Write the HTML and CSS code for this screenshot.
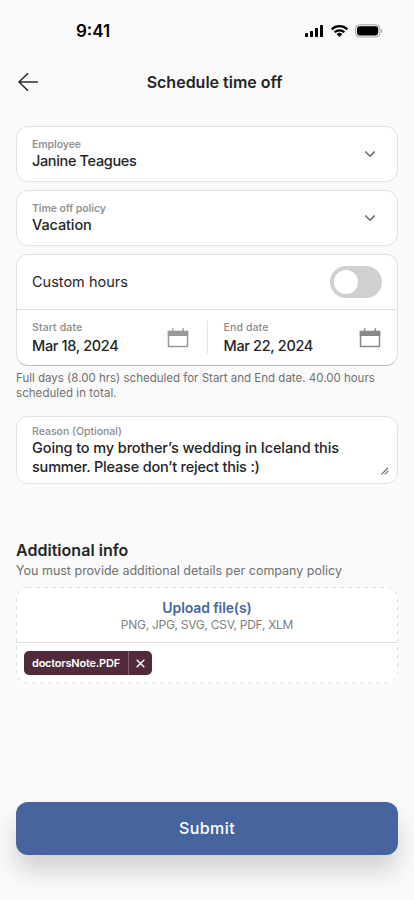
FILE: index.html
```html
<!DOCTYPE html>
<html lang="en">
<head>
<meta charset="utf-8">
<meta name="viewport" content="width=device-width, initial-scale=1">
<title>Schedule time off</title>
<link rel="stylesheet" href="styles.css">
</head>
<body>
<div class="screen">
  <div class="status">
    <span class="time">9:41</span>
    <svg class="status-icons" width="80" height="16" viewBox="0 0 80 16">
      <rect x="0" y="9" width="3" height="4" rx=".8"/>
      <rect x="5" y="7" width="3" height="6" rx=".8"/>
      <rect x="10" y="4" width="3" height="9" rx=".8"/>
      <rect x="15" y="1" width="3" height="12" rx=".8"/>
      <g fill="none" stroke="#000" stroke-width="2.3">
        <path d="M26.7 5.3a11.2 11.2 0 0 1 15.6 0"/>
        <path d="M29.6 8.3a7 7 0 0 1 9.8 0"/>
      </g>
      <path d="M34.5 13 31.7 10.2a4 4 0 0 1 5.6 0z"/>
      <rect x="50.5" y=".8" width="24.4" height="12.2" rx="3.8" fill="none" stroke="#a0a0a0"/>
      <rect x="52" y="2.3" width="21.2" height="9.2" rx="2.4"/>
      <path d="M76.2 5v4.2c1.7-.8 1.7-3.4 0-4.2z" fill="#a0a0a0"/>
    </svg>
  </div>
  <header class="header">
    <svg class="back" width="20" height="18" viewBox="0 0 20 18"><path d="M19.3 9H1M9.5.7 1 9l8.5 8.3"/></svg>
    <h1>Schedule time off</h1>
  </header>
  <main class="form">
    <div class="field select">
      <div><div class="label">Employee</div><div class="value name-value">Janine Teagues</div></div>
      <svg class="chevron" width="12" height="8" viewBox="0 0 12 8"><path d="M1.3 1.5 6 6.2l4.7-4.7"/></svg>
    </div>
    <div class="field select">
      <div><div class="label">Time off policy</div><div class="value">Vacation</div></div>
      <svg class="chevron" width="12" height="8" viewBox="0 0 12 8"><path d="M1.3 1.5 6 6.2l4.7-4.7"/></svg>
    </div>
    <div class="field schedule">
      <div class="custom"><span>Custom hours</span><span class="toggle"><span class="knob"></span></span></div>
      <div class="dates">
        <div class="date start">
          <div><div class="label">Start date</div><div class="value">Mar 18, 2024</div></div>
          <svg class="cal" width="22" height="20" viewBox="0 0 22 20"><path d="M.8 3h20.4v5H.8zM5.1.3h1.4V3H5.1zM15.5.3h1.4V3h-1.4z" fill="currentColor"/><rect x="1.5" y="3.5" width="19" height="15" fill="none" stroke="currentColor" stroke-width="1.5"/></svg>
        </div>
        <div class="date end">
          <div><div class="label">End date</div><div class="value">Mar 22, 2024</div></div>
          <svg class="cal" width="22" height="20" viewBox="0 0 22 20"><path d="M.8 3h20.4v5H.8zM5.1.3h1.4V3H5.1zM15.5.3h1.4V3h-1.4z" fill="currentColor"/><rect x="1.5" y="3.5" width="19" height="15" fill="none" stroke="currentColor" stroke-width="1.5"/></svg>
        </div>
      </div>
    </div>
    <p class="help">Full days (8.00 hrs) scheduled for Start and End date. 40.00 hours<br><span class="help-end">scheduled in total.</span></p>
    <div class="field reason">
      <div class="label reason-label">Reason (Optional)</div>
      <div class="value">Going to my brother’s wedding in Iceland this<br><span class="reason-end">summer. Please don’t reject this :)</span></div>
      <svg class="grip" width="8" height="8" viewBox="0 0 8 8"><path d="M.5 7.3 6.8 1M3.8 7.3 7.3 3.8"/></svg>
    </div>
    <h2>Additional info</h2>
    <p class="sub">You must provide additional details per company policy</p>
    <section class="upload">
      <svg class="dashes" width="382" height="97"><rect x=".5" y=".5" width="381" height="95.5" rx="11.5"/></svg>
      <div class="drop">
        <div class="link">Upload file(s)</div>
        <div class="types">PNG, JPG, SVG, CSV, PDF, XLM</div>
      </div>
      <div class="files">
        <div class="tag"><span class="name">doctorsNote.PDF</span><span class="remove"><svg width="9" height="9" viewBox="0 0 8 8"><path d="m.6.6 6.8 6.8M7.4.6.6 7.4"/></svg></span></div>
      </div>
    </section>
  </main>
  <button class="submit">Submit</button>
</div>
</body>
</html>
```
FILE: styles.css
```css
* { box-sizing: border-box; }
body { margin: 0; background: #fafafa; font-family: Inter, "Liberation Sans", sans-serif; color: #242526; }
h1, h2, p { margin: 0; }
svg { display: block; flex: none; }
.screen { width: 414px; height: 900px; display: flex; flex-direction: column; overflow: hidden; }
.status { height: 62px; padding: 21px 29px 0 76px; display: flex; justify-content: space-between; color: #000; }
.time { font-size: 17px; line-height: 20px; font-weight: 600; }
.status-icons { margin-top: 3px; }
.header { height: 40px; padding: 0 18px; display: grid; grid-template-columns: 20px 1fr 20px; align-items: center; }
.back { fill: none; stroke: #2b2c2d; stroke-width: 1.6; stroke-linecap: round; stroke-linejoin: round; }
h1 { font-size: 16px; line-height: 20px; font-weight: 600; text-align: center; padding-left: 15px; }
.form { margin: 24px 16px 0; height: 676px; display: flex; flex-direction: column; }
.field { background: #fff; border: 1px solid #e1e1e1; border-radius: 12px; }
.select { height: 56px; margin-bottom: 8px; padding: 11px 21px 0 15px; display: flex; justify-content: space-between; }
.label { font-size: 10.5px; line-height: 13px; font-weight: 500; color: #8b8b8b; letter-spacing: 0; white-space: nowrap; }
.select .label { font-weight: 600; letter-spacing: -.1px; color: #949494; }
.value { font-size: 14.5px; line-height: 19px; font-weight: 500; letter-spacing: -.11px; white-space: nowrap; }
.name-value { letter-spacing: -.35px; }
.chevron { margin-top: 12px; fill: none; stroke: #666; stroke-width: 1.5; }
.schedule { height: 112px; border-bottom-color: #bcbcbc; }
.custom { height: 55px; border-bottom: 1px solid #dedede; padding: 0 15px; display: flex; align-items: center; justify-content: space-between; font-size: 14.5px; line-height: 20px; }
.custom > span:first-child { padding-bottom: 1px; }
.toggle { width: 52px; height: 32px; border-radius: 16px; background: #d0d0d0; padding: 4px; display: flex; }
.knob { width: 24px; height: 24px; border-radius: 50%; background: #fff; }
.dates { height: 55px; display: flex; align-items: center; }
.date { height: 33px; display: flex; justify-content: space-between; }
.date .label { letter-spacing: .12px; }
.date .value { margin-top: 2px; letter-spacing: -.33px; }
.start { width: 190.5px; padding: 0 17.5px 0 15px; border-right: 1px solid #e5e5e5; }
.end { flex: 1; padding: 0 16px; }
.cal { margin-top: 7px; color: #999; }
.end .cal { color: #888; }
.help { margin-top: 5px; font-size: 11.5px; line-height: 15px; color: #707070; white-space: nowrap; }
.help-end { letter-spacing: .06px; }
.reason { position: relative; height: 68px; margin-top: 15px; padding: 8px 15px; }
.reason-end { letter-spacing: -.2px; }
.grip { position: absolute; right: 8px; bottom: 8px; fill: none; stroke: #666; stroke-width: 1.1; }
h2 { margin-top: 56px; font-size: 16px; line-height: 20px; font-weight: 600; letter-spacing: .03px; }
.sub { margin-top: 3px; font-size: 12.5px; line-height: 16px; color: #707070; white-space: nowrap; }
.upload { position: relative; height: 97px; margin-top: 8px; background: #fff; border-radius: 12px; }
.dashes { position: absolute; inset: 0; fill: none; stroke: #e0e0e0; stroke-dasharray: 4 4; }
.drop { height: 56px; padding-top: 12px; border-bottom: 1px solid #dedede; text-align: center; }
.link { font-size: 14px; line-height: 18px; font-weight: 600; letter-spacing: -.12px; color: #47669e; }
.types { font-size: 12px; line-height: 16px; letter-spacing: -.28px; color: #808080; }
.files { padding: 8px; display: flex; }
.tag { width: 128px; height: 24px; border-radius: 5px; background: #512b3c; color: #fff; display: flex; overflow: hidden; }
.name { width: 105px; border-right: 1px solid #805f6e; padding-left: 8px; font-size: 11px; line-height: 24px; font-weight: 600; letter-spacing: -.22px; }
.remove { flex: 1; display: flex; align-items: center; justify-content: center; }
.remove svg { fill: none; stroke: #fff; stroke-width: 1.2; }
.submit { margin: 0 16px; height: 53px; padding: 0 0 2px; border: 0; border-radius: 12px; background: #46659e; color: #fff; font: 500 16px/20px Inter, "Liberation Sans", sans-serif; letter-spacing: .45px; box-shadow: 0 16px 24px rgba(0,0,0,.16); }
```
